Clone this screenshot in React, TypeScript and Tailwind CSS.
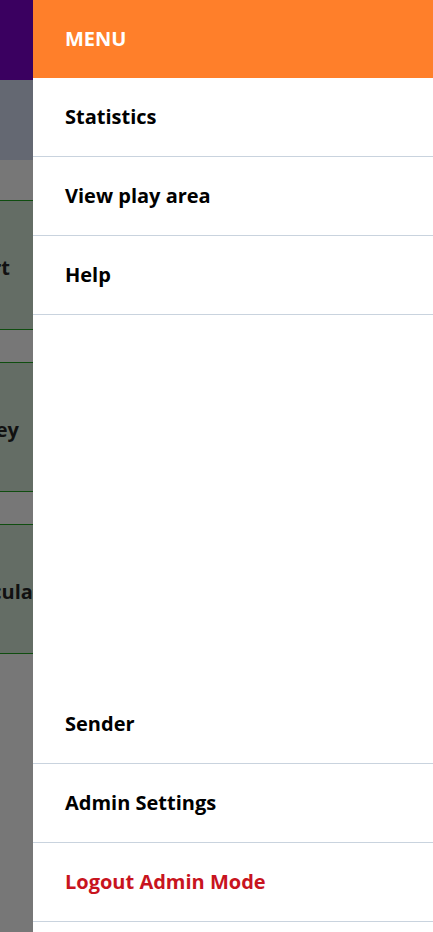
import { useState } from 'react';

type MenuItem = {
  id: string;
  label: string;
  danger?: boolean;
};

const topItems: MenuItem[] = [
  { id: 'stats', label: 'Statistics' },
  { id: 'play', label: 'View play area' },
  { id: 'help', label: 'Help' }
];

const bottomItems: MenuItem[] = [
  { id: 'sender', label: 'Sender' },
  { id: 'admin', label: 'Admin Settings' },
  { id: 'logout', label: 'Logout Admin Mode', danger: true }
];

function MenuRow({ item, onClick }: { item: MenuItem; onClick: (id: string) => void }) {
  return (
    <button
      className={`flex h-[79px] w-full items-center border-b border-[#c9d3de] pl-8 text-left text-[20px] font-bold ${
        item.danger ? 'text-[#c8141e]' : 'text-black'
      }`}
      onClick={() => onClick(item.id)}
      type="button"
    >
      {item.label}
    </button>
  );
}

export default function App() {
  const [, setSelected] = useState<string | null>(null);

  return (
    <div className="flex h-[932px] w-[433px] overflow-hidden font-['Open_Sans',sans-serif]">
      {/* dimmed page behind the drawer */}
      <div className="flex w-[33px] shrink-0 flex-col overflow-hidden bg-[#777777]">
        <div className="h-[80px] shrink-0 bg-[#3a0060]" />
        <div className="h-[80px] shrink-0 bg-[#646872]" />
        <div className="flex flex-col gap-[32px] pt-[40px]">
          <div className="flex h-[130px] items-center justify-end border-y border-[#0f4d0f] bg-[#646d65] pt-[6px] pr-[23px]">
            <span className="whitespace-nowrap text-[20px] font-bold text-[#111]">Start</span>
          </div>
          <div className="flex h-[130px] items-center justify-end border-y border-[#0f4d0f] bg-[#646d65] pt-[6px] pr-[14px]">
            <span className="whitespace-nowrap text-[20px] font-bold text-[#111]">Survey</span>
          </div>
          <div className="mr-[-30px] flex h-[130px] items-center justify-end border-y border-[#0f4d0f] bg-[#646d65] pt-[6px]">
            <span className="whitespace-nowrap text-[20px] font-bold text-[#111]">Calculator</span>
          </div>
        </div>
      </div>

      {/* drawer */}
      <nav className="flex h-full w-[400px] shrink-0 flex-col bg-white">
        <div className="flex h-[78px] shrink-0 items-center bg-[#ff7f2a] pl-8 text-[20px] font-bold text-white">
          MENU
        </div>
        <div className="flex flex-col">
          {topItems.map((item) => (
            <MenuRow item={item} key={item.id} onClick={setSelected} />
          ))}
        </div>
        <div className="flex-1" />
        <div className="flex flex-col pb-[10px]">
          {bottomItems.map((item) => (
            <MenuRow item={item} key={item.id} onClick={setSelected} />
          ))}
        </div>
      </nav>
    </div>
  );
}
